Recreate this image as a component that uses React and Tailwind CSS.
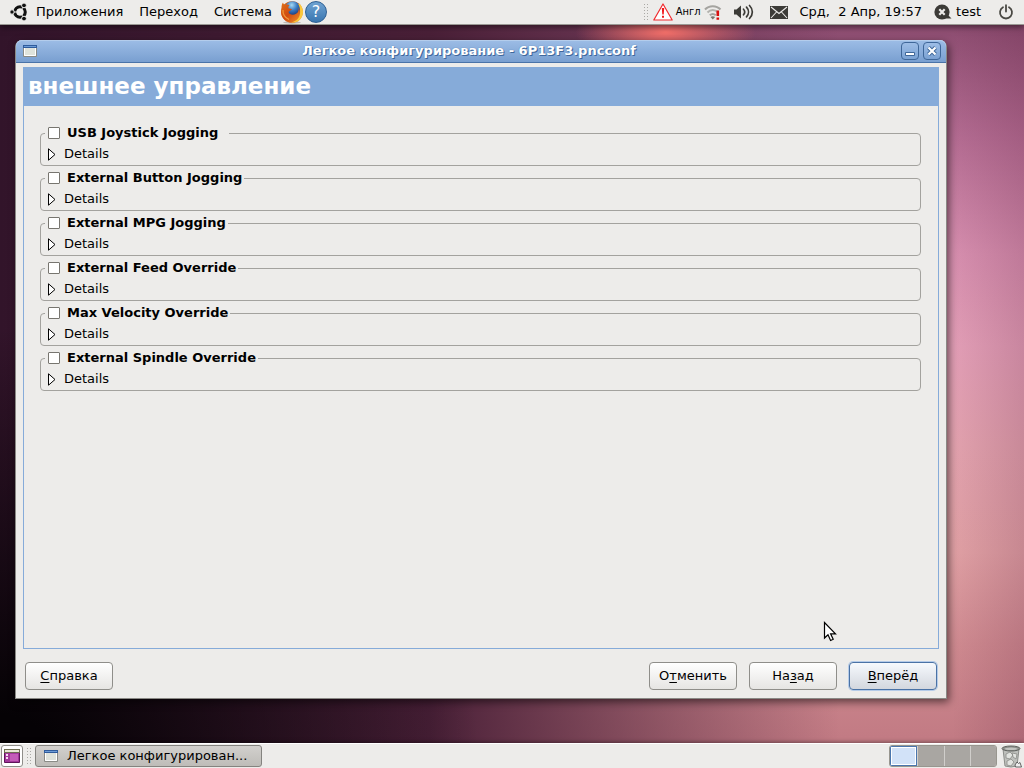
const groups = [
  { id: 'joystick', title: 'USB Joystick Jogging  ' },
  { id: 'buttons', title: 'External Button Jogging' },
  { id: 'mpg', title: 'External MPG Jogging' },
  { id: 'feed', title: 'External Feed Override' },
  { id: 'velocity', title: 'Max Velocity Override' },
  { id: 'spindle', title: 'External Spindle Override' },
]

function UbuntuLogo() {
  return (
    <svg width="18" height="18" viewBox="0 0 18 18" aria-hidden="true">
      <circle cx="10" cy="9" r="5.200" fill="none" stroke="#111" strokeWidth="3.200" />
      <g stroke="#edecea" strokeWidth="1">
        <path d="M10 9H3M10 9l5.500 9M10 9L15.500 0" />
        <circle cx="2" cy="9" r="2.200" fill="#111" />
        <circle cx="14" cy="2.400" r="2.400" fill="#111" />
        <circle cx="14" cy="15.600" r="2.400" fill="#111" />
      </g>
      <circle cx="10" cy="9" r="3.400" fill="#edecea" />
    </svg>
  )
}

function Firefox() {
  return (
    <svg width="24" height="24" viewBox="0 0 24 24" aria-hidden="true">
      <defs>
        <radialGradient id="globe" cx="0.45" cy="0.25" r="0.75">
          <stop offset="0" stopColor="#a5d8f4" />
          <stop offset="0.45" stopColor="#3a7cc4" />
          <stop offset="1" stopColor="#12296a" />
        </radialGradient>
        <linearGradient id="fox" x1="0" y1="0" x2="1" y2="1">
          <stop offset="0" stopColor="#e07018" />
          <stop offset="0.5" stopColor="#cf4a10" />
          <stop offset="1" stopColor="#f0902a" />
        </linearGradient>
      </defs>
      <ellipse cx="12" cy="22.500" rx="9" ry="1.200" fill="#8a8884" opacity="0.5" />
      <circle cx="12" cy="12" r="10.800" fill="url(#fox)" />
      <circle cx="12.500" cy="9" r="7.800" fill="url(#globe)" />
      <path d="M1.500 8C1.500 5.500 2 3.500 3 2.500c.3 1.500 1.200 2.300 2.500 2.300 1.500-.6 3-.4 4 .4-1 .8-1.500 2-.8 3.200 1.200.1 2.800.1 3.300.9-.6 1.300-2.500 1.400-3.500 2.600.6 2.600 4.500 3.600 7.500 1.900 2.300-1.300 3-3.500 2.500-6.300 1.200 1.500 2 4.500 1 8-1.500 4.500-5 6.500-9 6.500C4.500 21.500 1 16.500 1 12z" fill="url(#fox)" />
      <path d="M19.300 3.500c3.500 3 5 9 2.500 13.500-2.200 4-6.300 6-10.300 5.500 5-1.500 8-4.500 8.500-9 .4-3.500-.2-6.500-1.700-9.500z" fill="#fbc93c" />
      <path d="M3 10c-.5 4 2 8 6 9.500" fill="none" stroke="#f49a3a" strokeWidth="1.200" />
    </svg>
  )
}

function HelpIcon() {
  return (
    <span className="flex size-[22px] items-center justify-center rounded-full border border-[#2d5f93] bg-linear-to-b from-[#6fa3d2] to-[#3a76b0] text-base leading-none text-white">
      ?
    </span>
  )
}

function WarningIcon() {
  return (
    <svg width="20" height="18" viewBox="0 0 20 18" aria-hidden="true">
      <path d="M10 1 19.200 17H.8z" fill="#fff" stroke="#f02a2e" strokeWidth="1.200" strokeLinejoin="round" />
      <path d="M8.800 5h2.400l-.5 6.500H9.300zM9 12.800h2v2H9z" fill="#f0161a" />
    </svg>
  )
}

function WifiIcon() {
  return (
    <svg width="18" height="18" viewBox="0 0 18 18" aria-hidden="true">
      <g fill="none" stroke="#a5a4a0" strokeWidth="2">
        <path d="M1 6.500C5 2 12.500 2 16.500 6.500" />
        <path d="M3.500 9.500c3-3.200 7.500-3.200 10.500 0" stroke="#b4b3af" />
        <path d="M5.800 12.300c2-1.800 4-1.800 6 0" />
      </g>
      <path d="M8.800 16.500 6.500 14c1.300-1 3.300-1 4.600 0z" fill="#77766f" />
      <path d="M12.500 7.500h2.600v5.500h-2.600zM12.500 14.500h2.600v2.300h-2.600z" fill="#d81010" />
    </svg>
  )
}

function VolumeIcon() {
  return (
    <svg width="21" height="16" viewBox="0 0 21 16" aria-hidden="true">
      <path d="M1 5.500h2.500L8 1.500v13L3.500 10.500H1z" fill="#3c3b37" />
      <g fill="none" stroke="#3c3b37" strokeWidth="1.700" strokeLinecap="round">
        <path d="M10.500 5.200c1.400 1.600 1.400 4 0 5.600" />
        <path d="M13.500 3.200c2.600 2.800 2.600 6.800 0 9.600" />
        <path d="M16.500 1.500c3.800 3.800 3.800 9.200 0 13" />
      </g>
    </svg>
  )
}

function MailIcon() {
  return (
    <svg width="18" height="13" viewBox="0 0 18 13" aria-hidden="true">
      <path d="M0 0h18v13H0z" fill="#3c3b37" />
      <path d="M1 1l8 6.500L17 1M1 12l5.500-6M17 12l-5.500-6" fill="none" stroke="#edecea" strokeWidth="1.100" />
    </svg>
  )
}

function StatusIcon() {
  return (
    <svg width="18" height="16" viewBox="0 0 18 16" aria-hidden="true">
      <circle cx="8" cy="8" r="7.600" fill="#3c3b37" />
      <path d="M12 9l5.500 5.500H9z" fill="#3c3b37" />
      <path d="M5.300 5.300l5.400 5.400M10.700 5.300l-5.400 5.400" stroke="#edecea" strokeWidth="2.200" />
    </svg>
  )
}

function PowerIcon() {
  return (
    <svg width="16" height="16" viewBox="0 0 16 16" fill="none" stroke="#4a4944" strokeWidth="1.800" strokeLinecap="round" aria-hidden="true">
      <path d="M5 3.300a6 6 0 1 0 6 0M8 1.200v6.300" />
    </svg>
  )
}

function WindowIcon() {
  return (
    <svg width="14" height="12" viewBox="0 0 14 12" aria-hidden="true">
      <path d="M.5.500h13v11H.5z" fill="#dfe3dc" stroke="#8a8b86" />
      <path d="M1.500 3v7.500h11V3" fill="none" stroke="#fff" />
      <path d="M0 0h14v3H0z" fill="#2f5c9c" />
      <path d="M1 1h12v1H1z" fill="#6c9bd6" />
    </svg>
  )
}

function DesktopIcon() {
  return (
    <svg width="16" height="14" viewBox="0 0 16 14" aria-hidden="true">
      <path d="M.5.500h15v13H.5z" fill="#a2379a" stroke="#5e1459" />
      <path d="M6 5h8v7H6z" fill="#c45cb8" />
      <path d="M0 0h16v4H0z" fill="#6e6d52" />
      <path d="M1 1h14v2H1z" fill="#e8e8d4" />
      <path d="M2 5h2v2H2zM2 8h2v2H2z" fill="#f4dcf2" />
    </svg>
  )
}

function TrashIcon() {
  return (
    <svg width="21" height="23" viewBox="0 0 21 23" aria-hidden="true">
      <path d="M2 4h16l-2 17q-6 2-12 0z" fill="#bdbfbb" stroke="#8b8d89" />
      <path d="M5 9l4-2 3 3-3 4-4-1zM11 8l5 1-1 5-3-2zM6 16l4-2 3 3-3 4-4-1z" fill="#e2e4e0" stroke="#8a8c88" strokeWidth="0.800" />
      <ellipse cx="10" cy="3.500" rx="9" ry="2.500" fill="#8d908c" stroke="#60635f" />
      <ellipse cx="10" cy="3.800" rx="6.500" ry="1.200" fill="#c4c6c2" />
      <path d="M14 20l2-3 1.500 1.500 1.500-1 1.500 4.500h-6z" fill="#eee" stroke="#555" strokeWidth="0.900" />
    </svg>
  )
}

function Grip() {
  return (
    <svg width="5" height="17" viewBox="0 0 5 17" fill="none" stroke="#aaa9a5" strokeDasharray="1 2" aria-hidden="true">
      <path d="M.5 0v17M3.500 0v17" />
    </svg>
  )
}

function Group({ id, title }) {
  return (
    <fieldset className="min-w-0 rounded-[4px] border border-[#a3a29e] pb-px">
      <legend className="ml-1 flex h-[17px] items-center px-[3px] pr-[2px] pb-[2px]">
        <input
          id={id}
          type="checkbox"
          className="mr-[7px] size-3 appearance-none rounded-[1px] border border-[#77756f] bg-white"
        />
        <label htmlFor={id} className="font-bold whitespace-pre">
          {title}
        </label>
      </legend>
      <button type="button" className="mt-[2px] ml-[7px] flex h-5 items-center gap-2">
        <svg width="8" height="13" viewBox="0 0 8 13" aria-hidden="true">
          <path d="M.5.800v11.400L7 6.500z" fill="#fff" stroke="#000" />
        </svg>
        Details
      </button>
    </fieldset>
  )
}

function DialogButton({ before = '', hot, after, primary }) {
  return (
    <button
      type="button"
      className={
        primary
          ? 'h-7 w-[88px] rounded-[4px] border border-[#4a72a5] bg-linear-to-b from-[#f6f9fd] to-[#d3d7de] ring-1 ring-[#b5cbe8]'
          : 'h-7 w-[88px] rounded-[4px] border border-[#8f8e8a] bg-linear-to-b from-white to-[#e6e5e3]'
      }
    >
      {before}
      <span className="underline underline-offset-2">{hot}</span>
      {after}
    </button>
  )
}

function TopPanel() {
  return (
    <header className="relative flex h-[25px] shrink-0 items-center justify-between border-b border-[#9a9994] bg-[#edecea] px-[10px] shadow-[0_2px_6px_rgba(0,0,0,0.5)]">
      <nav className="flex items-center">
        <UbuntuLogo />
        <a href="#apps" className="ml-2">Приложения</a>
        <a href="#places" className="ml-4">Переход</a>
        <a href="#system" className="ml-4">Система</a>
        <a href="#firefox" aria-label="Firefox" className="ml-2"><Firefox /></a>
        <a href="#help" aria-label="Справка" className="ml-px"><HelpIcon /></a>
      </nav>
      <div className="flex items-center">
        <Grip />
        <span className="ml-1"><WarningIcon /></span>
        <span className="ml-[3px] font-['DejaVu_Sans_Condensed','DejaVu_Sans',sans-serif] text-[11px]">Англ</span>
        <span className="ml-[3px]"><WifiIcon /></span>
        <span className="ml-[11px]"><VolumeIcon /></span>
        <span className="ml-4"><MailIcon /></span>
        <time className="ml-3 whitespace-pre">Срд,  2 Апр, 19:57</time>
        <span className="ml-3"><StatusIcon /></span>
        <span className="ml-1">test</span>
        <button type="button" aria-label="Выключить" className="ml-[17px]"><PowerIcon /></button>
      </div>
    </header>
  )
}

function BottomPanel() {
  return (
    <footer className="relative flex h-[25px] shrink-0 items-center justify-between border-t border-white bg-[#edecea] shadow-[0_-1px_4px_rgba(0,0,0,0.4)]">
      <div className="flex items-center">
        <button type="button" aria-label="Рабочий стол" className="ml-px flex size-[22px] items-center justify-center rounded-[3px] border border-[#8f8e8a] bg-white">
          <DesktopIcon />
        </button>
        <span className="ml-1"><Grip /></span>
        <button type="button" className="ml-[3px] flex h-[22px] w-[227px] items-center gap-[9px] rounded-[3px] border border-[#84837f] bg-linear-to-b from-[#d2d0cd] to-[#bebcb8] px-2">
          <WindowIcon />
          <span className="truncate">Легкое конфигурирован...</span>
        </button>
      </div>
      <div className="flex items-center gap-1 pr-[2px]">
        <div className="flex h-[22px] w-[108px] gap-px overflow-hidden rounded-[3px] border border-[#98968f] bg-[#d0cecb]">
          <span className="flex-1 border border-[#4a76ae] bg-[#d2e2f8] ring-1 ring-white ring-inset"></span>
          <span className="flex-1 bg-[#a9a6a2]"></span>
          <span className="flex-1 bg-[#a9a6a2]"></span>
          <span className="flex-1 bg-[#a9a6a2]"></span>
        </div>
        <TrashIcon />
      </div>
    </footer>
  )
}

function TitleBar() {
  return (
    <div className="flex h-[23px] items-center rounded-t-[6px] border-b border-[#4a73a8] bg-linear-to-b from-[#9dbde6] to-[#799fd0] pr-[5px] pl-[7px] inset-shadow-[0_1px_0_#b4cdec]">
      <WindowIcon />
      <h1 className="flex-1 text-center font-bold text-white [text-shadow:1px_1px_0_#3f679c,0_0_1px_#3f679c]">
        Легкое конфигурирование - 6P13F3.pncconf
      </h1>
      <div className="flex gap-1">
        <button type="button" aria-label="Свернуть" className="flex size-[18px] items-center justify-center rounded-[4px] border border-[#3f6799] bg-linear-to-b from-[#9dbde6] to-[#7ba2d3]">
          <svg width="12" height="12" viewBox="0 0 12 12" aria-hidden="true">
            <path d="M1.500 7.500h9v3h-9z" fill="#fff" stroke="#3f6799" />
          </svg>
        </button>
        <button type="button" aria-label="Закрыть" className="flex size-[18px] items-center justify-center rounded-[4px] border border-[#3f6799] bg-linear-to-b from-[#9dbde6] to-[#7ba2d3]">
          <svg width="12" height="12" viewBox="0 0 12 12" aria-hidden="true">
            <path d="M2.500 2.500l7 7M9.500 2.500l-7 7" stroke="#3f6799" strokeWidth="4" />
            <path d="M2.500 2.500l7 7M9.500 2.500l-7 7" stroke="#fff" strokeWidth="2.200" />
          </svg>
        </button>
      </div>
    </div>
  )
}

export default function App() {
  return (
    <div className="relative flex h-screen flex-col overflow-hidden bg-[radial-gradient(90px_34px_at_65%_32px,#f4706a,transparent),radial-gradient(480px_440px_at_0%_100%,#050205_12%,transparent),linear-gradient(to_left,#5a1e3c30,transparent_7%),linear-gradient(to_right,#32142a,#4a2038_42%,#4a203800_82%),linear-gradient(to_bottom,#8c4c70_3%,#b46c92_18%,#d68eae_33%,#e29eb6_45%,#e2a2ae_58%,#e0a0a4_72%,#cf8a90_84%,#c27b84_96%)] font-['DejaVu_Sans',sans-serif] text-[13px] leading-4 text-black">
      <TopPanel />
      <main className="flex min-h-0 flex-1 flex-col pt-[15px] pr-[77px] pb-11 pl-[15px]">
        <section className="flex flex-1 flex-col rounded-t-[7px] border-r border-b border-l border-[#8a8985] bg-[#edecea] shadow-[2px_3px_8px_rgba(0,0,0,0.55)]">
          <TitleBar />
          <form className="flex flex-1 flex-col px-[7px] pt-1 pb-2">
            <div className="flex-1 border border-[#86abd9]">
              <h2 className="bg-[#86abd9] px-1 pt-1 pb-[6px] text-[23px] leading-7 font-bold text-white">
                внешнее управление
              </h2>
              <div className="flex flex-col gap-1 pt-[19px] pr-[17px] pb-4 pl-4">
                {groups.map((g) => (
                  <Group key={g.id} {...g} />
                ))}
              </div>
            </div>
            <div className="flex gap-3 px-[2px] pt-[13px]">
              <DialogButton hot="С" after="правка" />
              <div className="flex-1"></div>
              <DialogButton before="О" hot="т" after="менить" />
              <DialogButton before="На" hot="з" after="ад" />
              <DialogButton hot="В" after="перёд" primary />
            </div>
          </form>
        </section>
      </main>
      <BottomPanel />
      <svg className="pointer-events-none absolute top-[621px] left-[823px]" width="14" height="21" viewBox="0 0 14 21" aria-hidden="true">
        <path d="M1.500 1.500v15.500l3.500-3.300 2.600 5.800 2.600-1.200-2.600-5.500h4.900z" fill="#fff" stroke="#000" strokeWidth="1.200" />
      </svg>
    </div>
  )
}
